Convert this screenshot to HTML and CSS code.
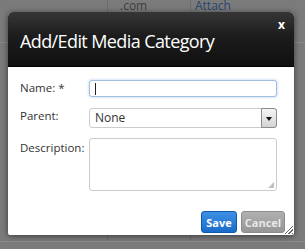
FILE: index.html
```html
<!DOCTYPE html>
<html lang="en">
<head>
    <meta charset="UTF-8">
    <meta name="viewport" content="width=device-width, initial-scale=1.0">
    <title>Add/Edit Media Category</title>
    <link rel="stylesheet" href="styles.css">
</head>
<body>
    <!-- page behind the modal -->
    <table class="page-table">
        <tr>
            <td class="col-a"></td>
            <td class="col-b">.com</td>
            <td class="col-c"><a href="#">Attach</a></td>
        </tr>
        <tr>
            <td class="col-a tall"></td>
            <td class="col-b tall"></td>
            <td class="col-c tall"></td>
        </tr>
    </table>

    <div class="dialog">
        <div class="dialog-head">
            <h2>Add/Edit Media Category</h2>
            <span class="close">x</span>
        </div>
        <form class="dialog-body">
            <div class="row row-name">
                <label>Name: *</label>
                <div class="field field-focus"><span class="caret"></span></div>
            </div>
            <div class="row row-parent">
                <label>Parent:</label>
                <div class="field select">
                    <span class="select-value">None</span>
                    <span class="select-arrow"></span>
                </div>
            </div>
            <div class="row row-desc">
                <label>Description:</label>
                <div class="field textarea"><span class="grip-dots"></span></div>
            </div>
            <div class="actions">
                <button type="button" class="btn btn-save">Save</button>
                <button type="button" class="btn btn-cancel">Cancel</button>
            </div>
            <span class="resize"></span>
        </form>
    </div>
</body>
</html>
```

FILE: styles.css
```css
body {
    margin: 0;
    background: #7b7b7b;
    font-family: 'Open Sans', 'DejaVu Sans', sans-serif;
    height: 249px;
    overflow: hidden;
    position: relative;
}

/* background page, already dimmed by the overlay */
.page-table {
    border-collapse: collapse;
    font-size: 12px;
    line-height: 12px;
    color: #3e3e3e;
}

.page-table td {
    height: 42px;
    padding: 0 0 0 12px;
    vertical-align: top;
    border-bottom: 1px solid #8a8a8a;
}

.page-table td.tall {
    height: 198px;
    border-bottom: 1px solid #8c8c8c;
}

.col-a { width: 95px; border-right: 1px solid #6c6c6c; }
.col-b { width: 70px; border-right: 1px solid #6c6c6c; }
.col-c { width: 110px; padding-left: 4px !important; }

.page-table a {
    color: #27466e;
    text-decoration: none;
}

.dialog {
    position: absolute;
    left: 8px;
    top: 12px;
    width: 286px;
    border-radius: 5px 5px 2px 2px;
    box-shadow: 0 1px 6px rgba(0,0,0,0.55);
    background: #fff;
}

.dialog-head {
    height: 54px;
    background: linear-gradient(#363636, #1c1c1c 45%, #101010);
    border-bottom: 1px solid #000;
    border-radius: 5px 5px 0 0;
    position: relative;
}

.dialog-head h2 {
    margin: 0;
    padding: 17px 0 0 12px;
    color: #fff;
    font-weight: normal;
    font-size: 18px;
    letter-spacing: -0.6px;
    line-height: 24px;
}

.close {
    position: absolute;
    right: 9px;
    top: 4px;
    color: #fff;
    font-weight: bold;
    font-size: 12px;
}

.dialog-body {
    margin: 0;
    padding: 13px 17px 2px 12px;
    position: relative;
}

.row {
    display: flex;
    align-items: flex-start;
}

.row label {
    width: 69px;
    font-size: 11.5px;
    line-height: 16px;
    color: #333;
}

.field {
    flex: 1;
    box-sizing: border-box;
    border: 1px solid #ccc;
    border-radius: 3px;
    background: #fff;
    position: relative;
}

.row-name .field { height: 17px; }
.row-parent { margin-top: 11px; }
.row-parent .field { height: 20px; display: flex; }
.row-desc { margin-top: 10px; }
.row-desc .field { height: 53px; }
.row-desc label { padding-top: 2px; }

.field-focus {
    border-color: #a3bfe0;
    box-shadow: 0 0 3px rgba(82,140,220,0.45);
}

.caret {
    position: absolute;
    left: 5px;
    top: 2px;
    width: 1px;
    height: 12px;
    background: #222;
}

.select-value {
    flex: 1;
    font-size: 12px;
    line-height: 18px;
    padding-left: 5px;
    color: #333;
}

.select-arrow {
    width: 14px;
    margin: -1px -1px -1px 0;
    border: 1px solid #8c8c8c;
    border-radius: 0 3px 3px 0;
    background: linear-gradient(#f4f4f4, #d4d4d4);
    position: relative;
}

.select-arrow::after {
    content: "";
    position: absolute;
    left: 4px;
    top: 8px;
    border-left: 3px solid transparent;
    border-right: 3px solid transparent;
    border-top: 4px solid #111;
}

.grip-dots {
    position: absolute;
    right: 2px;
    bottom: 2px;
    width: 6px;
    height: 6px;
    background: radial-gradient(circle, #aaa 0.6px, transparent 1px) 0 0 / 2px 2px;
    clip-path: polygon(100% 0, 100% 100%, 0 100%);
}

.actions {
    display: flex;
    justify-content: flex-end;
    gap: 4px;
    margin: 20px -8px 0 0;
}

.btn {
    height: 22px;
    box-sizing: border-box;
    border-radius: 3px;
    font-family: 'Open Sans', 'DejaVu Sans', sans-serif;
    font-weight: bold;
    font-size: 11px;
    padding: 0;
    cursor: pointer;
}

.btn-save {
    width: 36px;
    color: #fff;
    border: 1px solid #1058a8;
    background: linear-gradient(#3d90e4, #1a6ccb);
}

.btn-cancel {
    width: 44px;
    color: #e8e8e8;
    border: 1px solid #8d8d8d;
    background: linear-gradient(#b0b0b0, #969696);
}

.resize {
    position: absolute;
    right: 1px;
    bottom: 1px;
    width: 9px;
    height: 9px;
    background: repeating-linear-gradient(135deg, transparent 0 1.5px, #666 1.5px 2.5px);
    clip-path: polygon(100% 0, 100% 100%, 0 100%);
}
```
